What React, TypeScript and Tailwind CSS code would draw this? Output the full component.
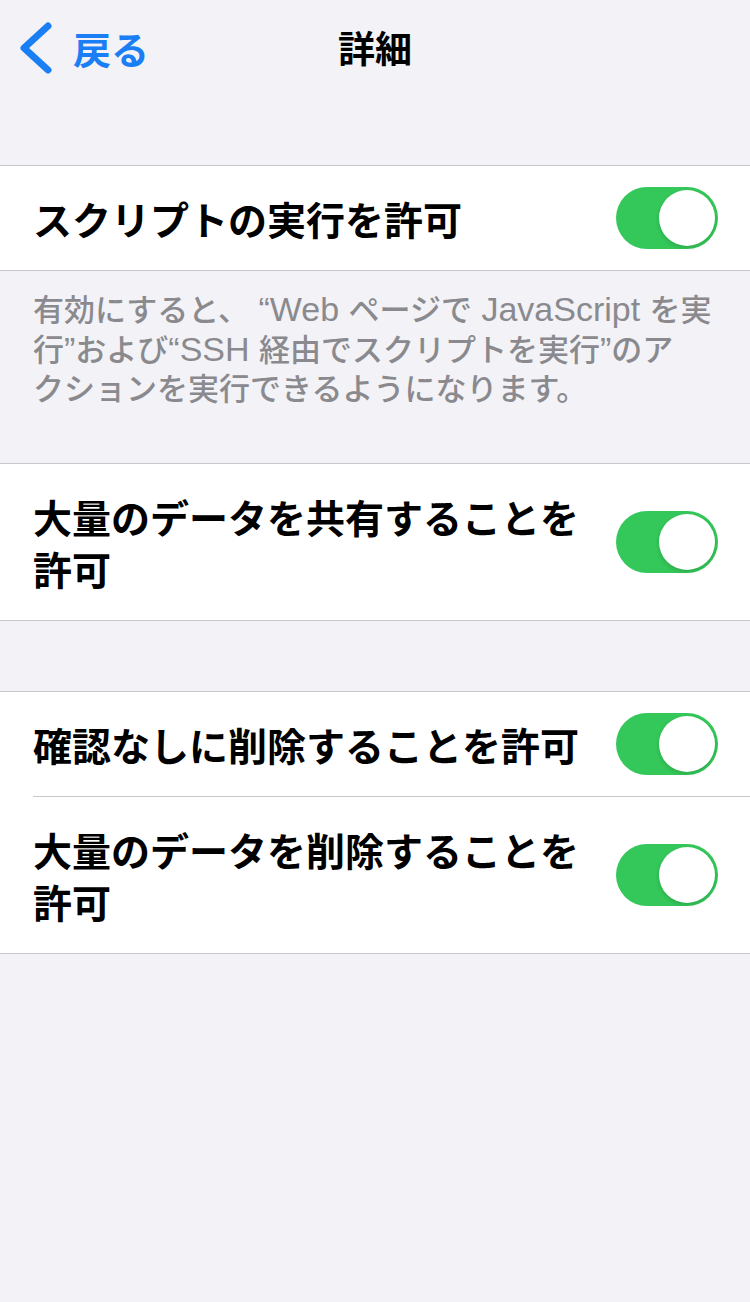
import React from 'react';

const latinFirst = '"Liberation Sans", "Noto Sans CJK JP", sans-serif';
const jpFirst = '"Noto Sans CJK JP", sans-serif';

function Toggle() {
    return (
        <div className="relative w-[102px] h-[62px] shrink-0 rounded-full bg-[#34c759]">
            <div className="absolute right-[3px] top-[3px] w-[56px] h-[56px] rounded-full bg-white shadow-[0_2px_4px_rgba(0,0,0,0.15)]" />
        </div>
    );
}

function Row({ label, inset }: { label: string; inset?: boolean }) {
    return (
        <div className="pl-[33px]">
            <div className={`flex items-center gap-[20px] pr-[32px] ${inset ? 'border-t border-[#c8c7cc]' : ''}`}>
                <div className="flex-1 py-[26px] text-[39px] leading-[52px] font-semibold text-black" style={{ fontFamily: jpFirst }}>
                    {label}
                </div>
                <Toggle />
            </div>
        </div>
    );
}

function Section({ children }: { children: React.ReactNode }) {
    return <div className="bg-white border-y border-[#c8c7cc]">{children}</div>;
}

// latin runs in the footer are set a bit larger, like the system font next to the kana
function L({ children }: { children: React.ReactNode }) {
    return <span className="text-[34px]">{children}</span>;
}

export default function App() {
    return (
        <div className="min-h-[1302px] w-[750px] bg-[#f2f2f7]" style={{ fontFamily: jpFirst }}>
            {/* nav bar */}
            <div className="grid grid-cols-3 items-center h-[95px]">
                <div className="flex items-center pl-[16px] text-[#1a7ef5]">
                    <svg width="40" height="54" viewBox="0 0 40 54" fill="none">
                        <path d="M32 5 L8 27 L32 49" stroke="currentColor" strokeWidth="7" strokeLinecap="round" strokeLinejoin="round" />
                    </svg>
                    <span className="ml-[17px] text-[38px] font-semibold leading-none">戻る</span>
                </div>
                <div className="text-center text-[37px] font-bold leading-none text-black">詳細</div>
                <div />
            </div>

            <div className="mt-[70px]">
                <Section>
                    <Row label="スクリプトの実行を許可" />
                </Section>
                <div
                    className="pl-[33px] pr-[20px] pt-[19px] pb-[54px] text-[31px] leading-[39px] font-medium text-[#8a8a8e] whitespace-nowrap"
                    style={{ fontFamily: latinFirst }}
                >
                    有効にすると、<L> “Web </L>ページで<L> JavaScript </L>を実<br />
                    行<L>”</L>および<L>“SSH </L>経由でスクリプトを実行<L>”</L>のア<br />
                    クションを実行できるようになります。
                </div>
                <Section>
                    <Row label="大量のデータを共有することを許可" />
                </Section>
                <div className="h-[70px]" />
                <Section>
                    <Row label="確認なしに削除することを許可" />
                    <Row label="大量のデータを削除することを許可" inset />
                </Section>
            </div>
        </div>
    );
}
